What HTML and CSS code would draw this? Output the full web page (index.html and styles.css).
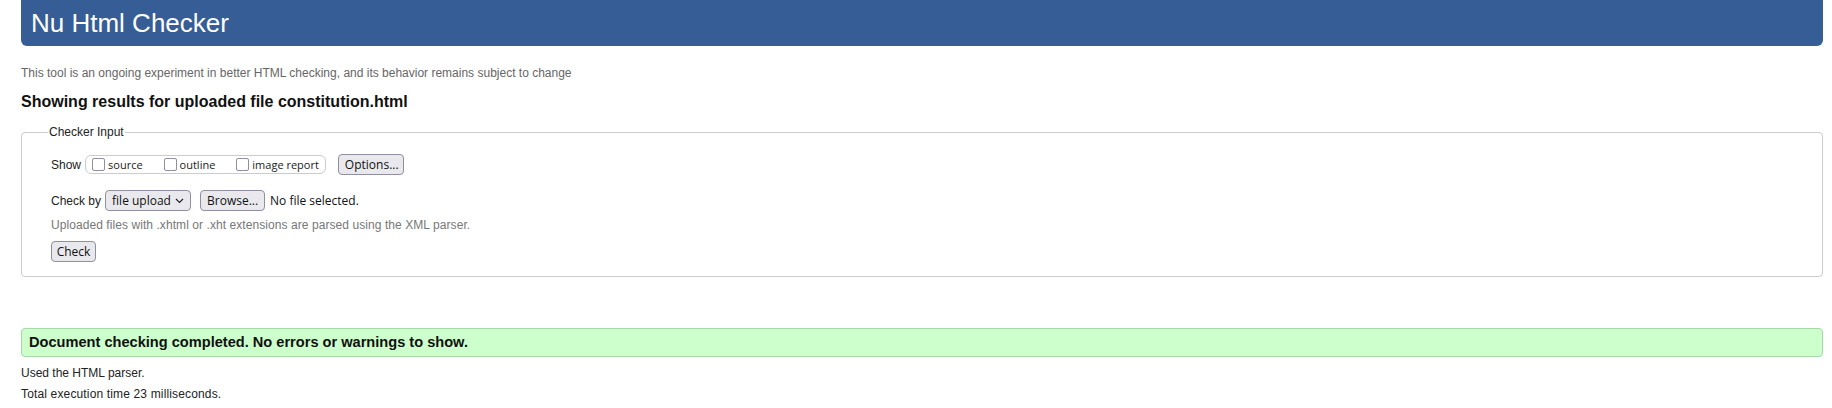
FILE: index.html
```html
<!DOCTYPE html>
<html lang="en">
<head>
<meta charset="utf-8">
<title>Nu Html Checker</title>
<link rel="stylesheet" href="styles.css">
</head>
<body>
<div class="page">
  <h1 class="banner">Nu Html Checker</h1>
  <p class="about">This tool is an ongoing experiment in better HTML checking, and its behavior remains subject to change</p>
  <h2 class="results-title">Showing results for uploaded file constitution.html</h2>
  <fieldset class="checker">
    <legend class="checker-legend">Checker Input</legend>
    <div class="row">
      <span class="lbl">Show</span>
      <span class="show-group">
        <label class="opt"><input type="checkbox" class="cb"><span class="opt-text">source</span></label>
        <label class="opt"><input type="checkbox" class="cb"><span class="opt-text">outline</span></label>
        <label class="opt"><input type="checkbox" class="cb"><span class="opt-text">image report</span></label>
      </span>
      <button class="btn btn-options" type="button">Options...</button>
    </div>
    <div class="row row-2">
      <span class="lbl">Check by</span>
      <span class="select"><span class="select-text">file upload</span><svg class="chev" width="9" height="6" viewBox="0 0 9 6"><path d="M1 1 L4.5 4.5 L8 1" fill="none" stroke="#222" stroke-width="1.2"/></svg></span>
      <button class="btn btn-browse" type="button">Browse...</button>
      <span class="nofile">No file selected.</span>
    </div>
    <p class="note">Uploaded files with .xhtml or .xht extensions are parsed using the XML parser.</p>
    <div class="row row-check">
      <button class="btn btn-check" type="button">Check</button>
    </div>
  </fieldset>
  <p class="success">Document checking completed. No errors or warnings to show.</p>
  <p class="stat stat-1">Used the HTML parser.</p>
  <p class="stat stat-2">Total execution time 23 milliseconds.</p>
</div>
</body>
</html>
```
FILE: styles.css
```css
html, body {
  margin: 0;
  padding: 0;
  background: #ffffff;
}
body {
  font-family: "Liberation Sans", Arial, sans-serif;
  color: #222222;
}
.page {
  padding: 0 9px 0 21px;
}
.banner {
  margin: 0;
  height: 46px;
  box-sizing: border-box;
  padding: 8px 10px 8px 10px;
  background: #365d95;
  color: #ffffff;
  font-weight: normal;
  font-size: 26px;
  line-height: 30px;
  border-radius: 0 0 6px 6px;
}
.about {
  margin: 21px 0 0 0;
  font-size: 12px;
  line-height: 13px;
  color: #666666;
}
.results-title {
  margin: 12px 0 0 0;
  font-size: 16px;
  line-height: 19px;
  font-weight: bold;
  color: #111111;
}
.checker {
  margin: 14px 0 0 0;
  padding: 0 20px 14px 29px;
  border: 1px solid #cccccc;
  border-radius: 4px;
  min-width: 0;
}
.checker-legend {
  font-size: 12px;
  line-height: 14px;
  padding: 0 1px;
  margin-left: -3px;
  color: #222222;
}
.row {
  display: flex;
  align-items: center;
  height: 21px;
  margin-top: 15px;
  font-size: 12px;
}
.row-2 {
  margin-top: 15px;
}
.lbl {
  color: #222222;
}
.show-group {
  display: flex;
  align-items: center;
  margin-left: 4px;
  height: 19px;
  box-sizing: border-box;
  border: 1px solid #cccccc;
  border-radius: 6px;
  padding: 0 6px 0 6px;
}
.opt {
  display: flex;
  align-items: center;
  margin-right: 21px;
}
.opt:last-child {
  margin-right: 0;
}
.cb {
  appearance: none;
  -webkit-appearance: none;
  width: 13px;
  height: 13px;
  margin: 0 3px 0 0;
  box-sizing: border-box;
  border: 1px solid #8f8f9d;
  border-radius: 2px;
  background: #ffffff;
}
.opt-text {
  font-family: "Open Sans", "Noto Sans", sans-serif;
  font-size: 11px;
  color: #222222;
}
.btn {
  appearance: none;
  -webkit-appearance: none;
  font-family: "Open Sans", "Noto Sans", sans-serif;
  font-size: 12px;
  color: #111111;
  background: #e9e9ed;
  border: 1px solid #8f8f9d;
  border-radius: 4px;
  height: 21px;
  padding: 0 6px;
  line-height: 19px;
  margin: 0;
}
.btn-options {
  margin-left: 12px;
  width: 66px;
}
.select {
  display: flex;
  align-items: center;
  justify-content: space-between;
  margin-left: 4px;
  width: 86px;
  height: 21px;
  box-sizing: border-box;
  padding: 0 6px 0 6px;
  background: #e9e9ed;
  border: 1px solid #8f8f9d;
  border-radius: 4px;
}
.select-text {
  font-family: "Open Sans", "Noto Sans", sans-serif;
  font-size: 12px;
  color: #111111;
}
.btn-browse {
  margin-left: 9px;
  width: 65px;
}
.nofile {
  margin-left: 5px;
  font-family: "Open Sans", "Noto Sans", sans-serif;
  font-size: 12px;
  color: #111111;
}
.note {
  margin: 7px 0 0 0;
  font-size: 12px;
  letter-spacing: 0.07px;
  line-height: 14px;
  color: #777777;
}
.row-check {
  margin-top: 9px;
}
.btn-check {
  width: 45px;
  padding: 0;
}
.success {
  margin: 51px 0 0 0;
  height: 29px;
  box-sizing: border-box;
  padding: 0 7px;
  background: #ccffcc;
  border: 1px solid #a8d8a8;
  border-radius: 4px;
  font-weight: bold;
  font-size: 14.6px;
  line-height: 27px;
  color: #111111;
}
.stat {
  margin: 0;
  font-size: 12px;
  line-height: 14px;
  color: #222222;
}
.stat-1 {
  margin-top: 9px;
}
.stat-2 {
  margin-top: 7px;
  letter-spacing: 0.15px;
}
```
